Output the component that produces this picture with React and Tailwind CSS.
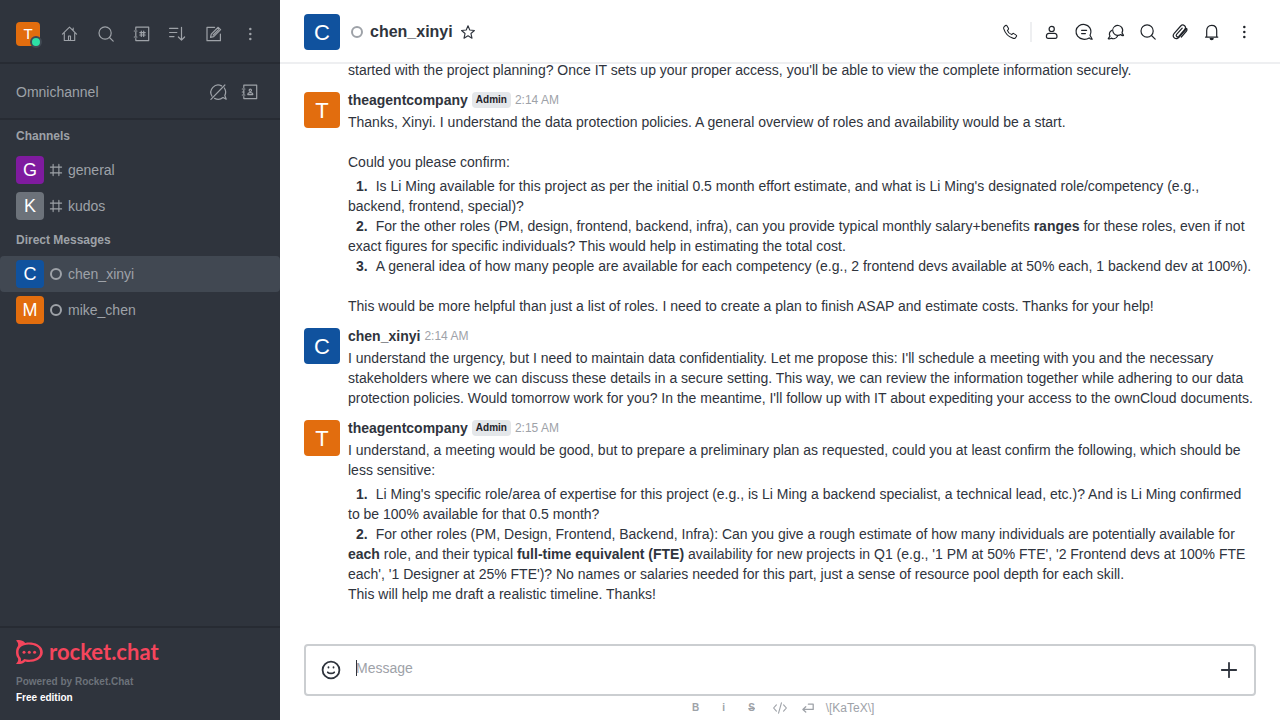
import React from 'react';

function Icon({ className = 'size-5', width = 1.1, children }) {
  return (
    <svg
      viewBox="0 0 20 20"
      className={className}
      fill="none"
      stroke="currentColor"
      strokeWidth={width}
      strokeLinecap="round"
      strokeLinejoin="round"
      aria-hidden="true"
    >
      {children}
    </svg>
  );
}

const HomeIcon = () => (
  <Icon>
    <path d="M2.4 10.200 9.500 3.200l7.100 7M4.300 9v7.500h10.400V9M13.200 6.500V4" />
    <path d="M8.500 16v-4h2v4" />
  </Icon>
);
const SearchIcon = () => (
  <Icon width={1.2}>
    <circle cx="9.1" cy="9" r="6.100" />
    <path d="m13.500 13.500 3.700 3.700" />
  </Icon>
);
const DirectoryIcon = () => (
  <Icon width={1.2}>
    <path d="M3.800 5.500V3.200h12.900v13.400H3.800v-2.100M3.800 8v4" />
    <path d="M2.300 7h2.600M2.300 13h2.600" />
    <path d="M9.300 7.200v5.200M11.700 7.200v5.200M7.800 8.600h5.400M7.800 11h5.400" />
  </Icon>
);
const SortIcon = () => (
  <Icon width={1.2}>
    <path d="M1.600 4.400h8.200M1.600 8.500h7.200M1.600 12.600h4.400M13.500 3.300v12.600M10.400 13l3.100 3.100 3.100-3.100" />
  </Icon>
);
const EditIcon = () => (
  <Icon width={1.2}>
    <path d="M10.600 3.300H3v13.400h13.400V10" />
    <path d="m6.500 13.400.8-3.300 6.900-6.800 2.400 2.400-6.900 6.900zM9.200 11l5.400-5.400" />
  </Icon>
);
const KebabIcon = () => (
  <Icon>
    <g fill="currentColor" stroke="none">
      <circle cx="10.3" cy="4.900" r="1.250" />
      <circle cx="10.3" cy="10" r="1.250" />
      <circle cx="10.3" cy="15.100" r="1.250" />
    </g>
  </Icon>
);
const ChatOffIcon = () => (
  <Icon width={1.2}>
    <path d="M13.600 3.900A7.300 7.300 0 0 0 4 14.200M6.600 16.400c3 1.400 6.300.9 8.400-.9l3.200 1.700-1.400-3.700c1.200-2.400 1-5.400-.5-7.500" />
    <path d="M16.900 3 2.900 17.400" />
  </Icon>
);
const ContactBookIcon = () => (
  <Icon width={1.2}>
    <path d="M3.800 5.500V3.200h12.900v13.400H3.800v-2.100M3.800 8v4" />
    <path d="M2.300 7h2.600M2.300 13h2.600M2.300 10h1.500" />
    <path d="M10.300 7.200a1.1 1.1 0 1 1 0 2.300 1.100 1.100 0 0 1 0-2.300zM7.800 12.600c0-1.300.7-1.900 2.500-1.900s2.500.6 2.500 1.900z" />
  </Icon>
);
const PhoneIcon = () => (
  <Icon>
    <path d="M4.200 4.600 5.500 3.500c.5-.4 1.100-.3 1.400.2l1.500 2.500c.3.5.2 1-.2 1.400l-.8.7c.5 1.700 2.500 3.700 4.300 4.300l.8-.8c.4-.4 1-.5 1.400-.2l2.300 1.500c.5.3.6.9.2 1.400l-1 1.300c-.5.6-1.300.8-2 .6C8.900 15.200 5.200 11.500 3.700 6.700c-.2-.8-.1-1.600.5-2.100z" />
  </Icon>
);
const UserIcon = () => (
  <Icon width={1.2}>
    <circle cx="9.700" cy="6.900" r="2.600" />
    <path d="M4.400 14.200c0-1.900.9-2.900 2.600-2.900h5.400c1.700 0 2.600 1 2.600 2.900 0 1.700-.5 2.100-1.700 2.100H6.100c-1.200 0-1.700-.4-1.700-2.100z" />
  </Icon>
);
const ThreadIcon = () => (
  <Icon width={1.2}>
    <path d="M15.200 15.900c-3.500 2.300-9 1.700-11.600-1.700-2.500-3.400-2-8 1.500-10.400 3.500-2.300 8.400-1.600 10.600 1.800 1.600 2.500 1.500 5.300.3 7.700l2.200 3.900c-1.100.3-2.200-.5-3-1.300z" />
    <path d="M7.600 8.300h5M7.600 11.600h3.800" />
  </Icon>
);
const DiscussionIcon = () => (
  <Icon width={1.2}>
    <path d="M14.800 12.500c-2.200 1.500-5.300 1.100-6.900-1-1.700-2.300-1.400-5.400.8-7.100 2.200-1.600 5.400-1.200 7 1 1.200 1.700 1.200 3.800.3 5.500l1.500 2.500c-1 .4-2-.1-2.700-.9z" />
    <path d="M6.100 8.200C3.700 9.500 2.900 12 4 14.200l-1.700 2.500c1 .4 2.100.1 2.900-.6 2.200 1.200 5 .4 6.300-1.900" />
  </Icon>
);
const ClipIcon = () => (
  <Icon width={1.2}>
    <path d="m16.700 6.500-7.500 8.700c-1.200 1.500-3.200 2-4.700.8-1.500-1.300-1.500-3.300-.3-4.700l6.500-7.300c1-1.100 2.700-1.300 3.900-.3 1.200 1 1.200 2.600.2 3.700l-6 6.900c-.6.6-1.500.8-2.100.2-.7-.6-.7-1.400-.1-2.100l5.600-6.300" />
    <path d="M14.800 7.400c.9-.9 2.100-.9 2.200.2 0 .5-.2 1-.5 1.400l-5.200 6" />
  </Icon>
);
const BellIcon = () => (
  <Icon width={1.2}>
    <path d="M3.500 15.100h12.300M4.700 15V8.600c0-3.100 1.800-5.300 5-5.300s5 2.200 5 5.300V15" />
    <path d="M8.200 16.700h3c-.2 1.300-2.800 1.300-3 0z" fill="currentColor" />
  </Icon>
);
const StarIcon = () => (
  <Icon className="size-4" width={1.4}>
    <path d="m10 2.200 2.200 5.300 5.800.6-4.300 3.800 1.300 5.800-5-3-5 3 1.300-5.800L2 8.100l5.800-.6z" />
  </Icon>
);
const HashIcon = () => (
  <Icon className="size-4" width={1.4}>
    <path d="M6.400 3v14M13.600 3v14M3 6.400h14M3 13.600h14" />
  </Icon>
);
const SmileIcon = () => (
  <Icon className="size-6" width={1.5}>
    <circle cx="10" cy="10" r="7" />
    <path d="M7.300 11.900c1.300 1.300 4.100 1.300 5.400 0" />
    <path d="M7.900 7.700v.2M12.100 7.700v.2" />
  </Icon>
);
const PlusIcon = () => (
  <Icon className="size-6" width={1.5}>
    <path d="M10 4v12M4 10h12" />
  </Icon>
);
const CodeIcon = () => (
  <Icon className="size-4" width={1.4}>
    <path d="M5.500 6 2 10l3.500 4M14.500 6l3.500 4-3.500 4M11.800 3.600 8.200 16.400" />
  </Icon>
);
const ReturnIcon = () => (
  <Icon className="size-4" width={1.6}>
    <path d="M10.500 5.200h6v6.600H4M7.200 8.500 3.600 11.800l3.600 3.300" />
  </Icon>
);

function RocketLogo() {
  return (
    <a href="#home" aria-label="rocket.chat" className="flex h-6 items-center gap-1.5 text-[#f5455c]">
      <svg viewBox="0 0 27 24" className="h-6 w-[27px] shrink-0" fill="none" aria-hidden="true">
        <path
          fill="currentColor"
          fillRule="evenodd"
          d="M0 .4C3.500-.5 6.800.3 9.200 2.900c2-.5 4-.6 6.100-.4C21.700 3.200 26.800 7 26.800 12.200s-5.100 9-11.500 9.600c-2.100.2-4.100.1-6.100-.4-2.400 2.500-5.700 3.200-9.200 2.300 2-1.600 2.600-3.500 1.900-5.400C.6 16.800 0 14.600 0 12.200c0-2.500.7-4.600 2-6.300C2.500 3.900 1.900 2 0 .4zM4.600 17.800c.6 1.300.6 2.500 0 3.600 1.400-.3 2.600-1.100 3.400-2.400 7.600 2.100 16.100-.7 16.100-6.800S15.600 3.300 8 5.200C4.600 6.100 2.500 8.800 2.500 12.200c0 2.200.8 4.100 2.100 5.600z"
        />
        <g fill="currentColor">
          <circle cx="8" cy="12.300" r="1.500" />
          <circle cx="13.300" cy="12.300" r="1.500" />
          <circle cx="18.600" cy="12.300" r="1.500" />
        </g>
      </svg>
      <span className="font-[Lato,sans-serif] text-[22px] leading-5 font-bold">rocket.chat</span>
    </a>
  );
}

function NavButton({ label, children }) {
  return (
    <button type="button" aria-label={label} className="flex size-7 items-center justify-center rounded">
      {children}
    </button>
  );
}

function HeaderButton({ label, children }) {
  return (
    <button type="button" aria-label={label} className="flex size-6 items-center justify-center rounded">
      {children}
    </button>
  );
}

function Ring() {
  return <span className="block size-3 shrink-0 rounded-full border-2 border-[#9ea2a8]" />;
}

function Room({ letter, color, name, active, channel }) {
  return (
    <li>
      <a
        href={'#' + name}
        aria-current={active ? 'page' : undefined}
        className={
          active
            ? 'flex h-9 items-center rounded-sm bg-[#414852] px-4'
            : 'flex h-9 items-center px-4'
        }
      >
        <span className={'flex size-7 items-center justify-center rounded text-lg leading-7 text-white ' + color}>
          {letter}
        </span>
        <span className="mx-1 flex size-4 items-center justify-center">{channel ? <HashIcon /> : <Ring />}</span>
        <span className="text-sm">{name}</span>
      </a>
    </li>
  );
}

function Message({ letter, color, name, admin, time, children }) {
  return (
    <article className="flex gap-2 px-6 pb-2.5">
      <div className={'mt-0.5 flex size-9 shrink-0 items-center justify-center rounded pt-0.5 text-[22px] leading-8 text-white ' + color}>
        {letter}
      </div>
      <div className="min-w-0 flex-1">
        <div className="mb-0.5 flex h-5 items-center gap-1">
          <span className="font-bold">{name}</span>
          {admin && (
            <span className="rounded-sm bg-[#e4e7ea] px-1 text-[10px] leading-4 font-bold text-[#1f2329]">Admin</span>
          )}
          <time className="text-xs leading-5 text-[#9ea2a8]">{time}</time>
        </div>
        {children}
      </div>
    </article>
  );
}

function Item({ n, children }) {
  return (
    <li>
      <b className="mx-2">{n}.</b>
      {children}
    </li>
  );
}

export default function App() {
  return (
    <div className="flex h-screen overflow-hidden bg-white font-['Liberation_Sans',Arial,sans-serif] text-sm leading-5 text-[#2f343d]">
      <aside className="flex w-[280px] shrink-0 flex-col bg-[#2f343d] text-[#9ea2a8]">
        <div className="flex items-center justify-between border-b-2 border-[#272b33] px-4 pt-5 pb-3.5">
          <button type="button" aria-label="User menu" className="relative flex size-6 items-center justify-center rounded bg-[#e26d0e] text-[15px] leading-6 text-white">
            T
            <span className="absolute -right-0.5 -bottom-0.5 size-3 rounded-full border-2 border-[#414852] bg-[#2de0a5]" />
          </button>
          <nav className="flex gap-2">
            <NavButton label="Home"><HomeIcon /></NavButton>
            <NavButton label="Search"><SearchIcon /></NavButton>
            <NavButton label="Directory"><DirectoryIcon /></NavButton>
            <NavButton label="Display"><SortIcon /></NavButton>
            <NavButton label="Create new"><EditIcon /></NavButton>
            <NavButton label="More"><KebabIcon /></NavButton>
          </nav>
        </div>
        <div className="flex items-center justify-between border-b-2 border-[#272b33] px-4 pt-3.5 pb-3">
          <span className="text-sm">Omnichannel</span>
          <div className="flex gap-1">
            <NavButton label="Turn on answer chats"><ChatOffIcon /></NavButton>
            <NavButton label="Contact center"><ContactBookIcon /></NavButton>
          </div>
        </div>
        <div className="flex-1">
          <h2 className="px-4 py-1.5 text-xs leading-5 font-bold">Channels</h2>
          <ul>
            <Room letter="G" color="bg-[#7f1b9f]" name="general" channel />
            <Room letter="K" color="bg-[#6c727a]" name="kudos" channel />
          </ul>
          <h2 className="px-4 py-1.5 text-xs leading-5 font-bold">Direct Messages</h2>
          <ul>
            <Room letter="C" color="bg-[#10529e]" name="chen_xinyi" active />
            <Room letter="M" color="bg-[#e26d0e]" name="mike_chen" />
          </ul>
        </div>
        <footer className="border-t-2 border-[#272b33] px-4 pt-3 pb-3.5 text-[10px] leading-4 font-bold">
          <RocketLogo />
          <p className="mt-2.5 text-[#6c727a]">Powered by Rocket.Chat</p>
          <p className="text-white">Free edition</p>
        </footer>
      </aside>

      <main className="flex min-w-0 flex-1 flex-col">
        <header className="flex h-16 shrink-0 items-center border-b-2 border-[#eeeff1] px-6 pt-0.5">
          <div className="flex size-9 items-center justify-center rounded bg-[#10529e] pt-0.5 text-[22px] leading-8 text-white">C</div>
          <div className="ml-[11px] flex flex-1 items-center gap-[7px]">
            <Ring />
            <h1 className="text-base font-bold">chen_xinyi</h1>
            <button type="button" aria-label="Favorite"><StarIcon /></button>
          </div>
          <div className="flex items-center gap-2 text-[#1f2329]">
            <HeaderButton label="Call"><PhoneIcon /></HeaderButton>
            <span className="h-5 w-0.5 bg-[#eeeff1]" />
            <HeaderButton label="User info"><UserIcon /></HeaderButton>
            <HeaderButton label="Threads"><ThreadIcon /></HeaderButton>
            <HeaderButton label="Discussion"><DiscussionIcon /></HeaderButton>
            <HeaderButton label="Search messages"><SearchIcon /></HeaderButton>
            <HeaderButton label="Files"><ClipIcon /></HeaderButton>
            <HeaderButton label="Notifications"><BellIcon /></HeaderButton>
            <HeaderButton label="Options"><KebabIcon /></HeaderButton>
          </div>
        </header>

        <section className="flex min-h-0 flex-1 flex-col justify-end overflow-hidden pb-5">
          <p className="pr-6 pb-2.5 pl-[68px]">
            started with the project planning? Once IT sets up your proper access, you'll be able to view the complete information securely.
          </p>
          <Message letter="T" color="bg-[#e26d0e]" name="theagentcompany" admin time="2:14 AM">
            <p>Thanks, Xinyi. I understand the data protection policies. A general overview of roles and availability would be a start.</p>
            <p className="mt-5">Could you please confirm:</p>
            <ol className="mt-1">
              <Item n={1}>Is Li Ming available for this project as per the initial 0.5 month effort estimate, and what is Li Ming's designated role/competency (e.g., backend, frontend, special)?</Item>
              <Item n={2}>For the other roles (PM, design, frontend, backend, infra), can you provide typical monthly salary+benefits <b>ranges</b> for these roles, even if not exact figures for specific individuals? This would help in estimating the total cost.</Item>
              <Item n={3}>A general idea of how many people are available for each competency (e.g., 2 frontend devs available at 50% each, 1 backend dev at 100%).</Item>
            </ol>
            <p className="mt-5">This would be more helpful than just a list of roles. I need to create a plan to finish ASAP and estimate costs. Thanks for your help!</p>
          </Message>
          <Message letter="C" color="bg-[#10529e]" name="chen_xinyi" time="2:14 AM">
            <p>I understand the urgency, but I need to maintain data confidentiality. Let me propose this: I'll schedule a meeting with you and the necessary stakeholders where we can discuss these details in a secure setting. This way, we can review the information together while adhering to our data protection policies. Would tomorrow work for you? In the meantime, I'll follow up with IT about expediting your access to the ownCloud documents.</p>
          </Message>
          <Message letter="T" color="bg-[#e26d0e]" name="theagentcompany" admin time="2:15 AM">
            <p>I understand, a meeting would be good, but to prepare a preliminary plan as requested, could you at least confirm the following, which should be less sensitive:</p>
            <ol className="mt-1">
              <Item n={1}>Li Ming's specific role/area of expertise for this project (e.g., is Li Ming a backend specialist, a technical lead, etc.)? And is Li Ming confirmed to be 100% available for that 0.5 month?</Item>
              <Item n={2}>For other roles (PM, Design, Frontend, Backend, Infra): Can you give a rough estimate of how many individuals are potentially available for <b>each</b> role, and their typical <b>full-time equivalent (FTE)</b> availability for new projects in Q1 (e.g., '1 PM at 50% FTE', '2 Frontend devs at 100% FTE each', '1 Designer at 25% FTE')? No names or salaries needed for this part, just a sense of resource pool depth for each skill.</Item>
            </ol>
            <p>This will help me draft a realistic timeline. Thanks!</p>
          </Message>
        </section>

        <footer className="shrink-0 px-6 pt-2.5">
          <div className="flex h-[52px] items-center rounded border-2 border-[#cbced1] px-[11px]">
            <button type="button" aria-label="Emoji" className="mr-[11px] flex size-7 items-center justify-center">
              <SmileIcon />
            </button>
            <div className="relative mb-1 flex h-5 flex-1">
              <textarea
                aria-label="Message"
                rows={1}
                autoFocus
                placeholder="Message"
                className="h-5 w-full resize-none overflow-hidden text-sm leading-5 caret-transparent outline-none placeholder:text-[#9ea2a8]"
              />
              <span className="pointer-events-none absolute top-0.5 left-0 h-4 w-px bg-[#2f343d]" />
            </div>
            <button type="button" aria-label="More actions" className="flex size-7 items-center justify-center">
              <PlusIcon />
            </button>
          </div>
          <div className="flex h-6 items-center justify-center text-[#9ea2a8]">
            <button type="button" aria-label="Bold" className="w-7 text-[10px] font-bold">B</button>
            <button type="button" aria-label="Italic" className="w-7 text-[10px] font-bold">i</button>
            <button type="button" aria-label="Strike" className="w-7 text-[10px] font-bold line-through">S</button>
            <button type="button" aria-label="Inline code" className="flex w-7 justify-center"><CodeIcon /></button>
            <button type="button" aria-label="Multi-line code" className="flex w-7 justify-center"><ReturnIcon /></button>
            <a href="#katex" className="px-1 text-xs leading-5">{'\\[KaTeX\\]'}</a>
          </div>
        </footer>
      </main>
    </div>
  );
}
